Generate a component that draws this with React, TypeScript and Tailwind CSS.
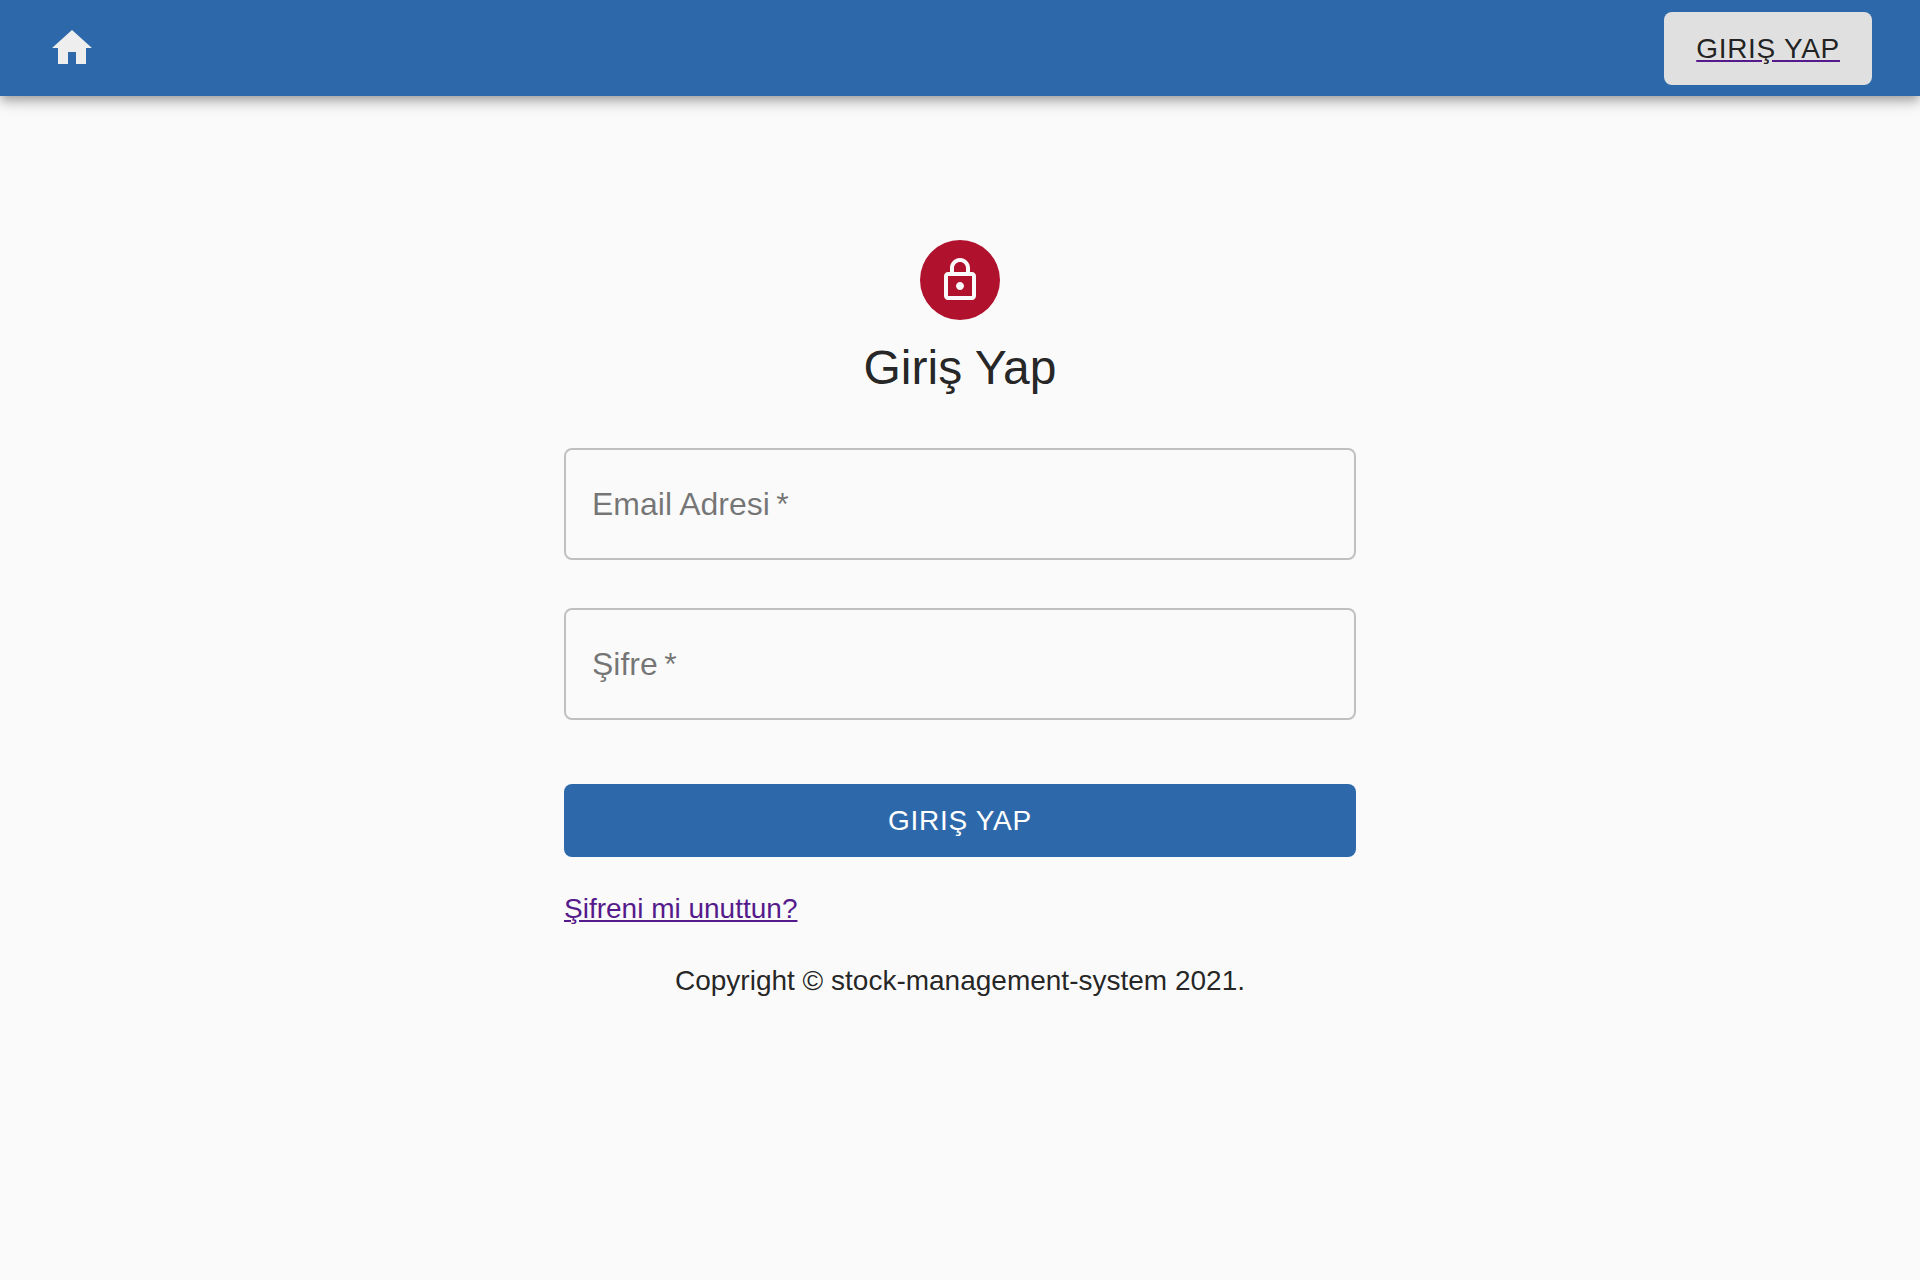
import { useState } from "react";

type FieldProps = {
  id: string;
  label: string;
  type: string;
  autoComplete: string;
};

function HomeIcon() {
  return (
    <svg viewBox="0 0 24 24" className="size-12 fill-current" aria-hidden="true">
      <path d="M10 20v-6h4v6h5v-8h3L12 3 2 12h3v8z" />
    </svg>
  );
}

function LockIcon() {
  return (
    <svg viewBox="0 0 24 24" className="size-12 fill-current" aria-hidden="true">
      <path d="M18 8h-1V6c0-2.76-2.24-5-5-5S7 3.24 7 6v2H6c-1.1 0-2 .9-2 2v10c0 1.1.9 2 2 2h12c1.1 0 2-.9 2-2V10c0-1.1-.9-2-2-2zM9 6c0-1.66 1.34-3 3-3s3 1.34 3 3v2H9V6zm9 14H6V10h12v10zm-6-3c1.1 0 2-.9 2-2s-.9-2-2-2-2 .9-2 2 .9 2 2 2z" />
    </svg>
  );
}

function Field({ id, label, type, autoComplete }: FieldProps) {
  const [value, setValue] = useState("");
  return (
    <div className="relative">
      <input
        id={id}
        name={id}
        type={type}
        required
        autoComplete={autoComplete}
        placeholder=" "
        value={value}
        onChange={(e) => setValue(e.target.value)}
        className="peer block h-28 w-full rounded-lg border-2 border-black/23 bg-transparent px-7 text-[32px] outline-none focus:border-[#2d69aa]"
      />
      <label
        htmlFor={id}
        className="pointer-events-none absolute inset-y-0 left-7 flex items-center text-[32px] leading-8 whitespace-pre text-black/54 peer-focus:hidden peer-[:not(:placeholder-shown)]:hidden"
      >
        {label}
        {"\u2009*"}
      </label>
    </div>
  );
}

export default function App() {
  return (
    <div className="min-h-screen bg-[#fafafa] font-['Liberation_Sans',Arial,sans-serif] text-[28px] leading-10 text-black/87">
      <header className="flex h-24 items-center justify-between bg-[#2d69aa] px-12 shadow-[0_4px_8px_-2px_rgba(0,0,0,0.2),0_8px_10px_0_rgba(0,0,0,0.14),0_2px_20px_0_rgba(0,0,0,0.12)]">
        <a href="#home" aria-label="Ana sayfa" className="text-[#eeeeee]">
          <HomeIcon />
        </a>
        <a
          href="#login"
          className="rounded-lg bg-[#e0e0e0] px-8 py-3 leading-[49px] tracking-wide underline decoration-[#551a8b]"
        >
          GIRIŞ YAP
        </a>
      </header>

      <main className="mx-auto flex max-w-[888px] flex-col px-12 pt-36">
        <div className="flex size-20 items-center justify-center self-center rounded-full bg-[#b0112d] text-[#fafafa]">
          <LockIcon />
        </div>
        <h1 className="mt-4 text-center text-[48px] leading-[64px]">Giriş Yap</h1>

        <form className="mt-12 flex flex-col" onSubmit={(e) => e.preventDefault()}>
          <div className="flex flex-col gap-12">
            <Field id="email" label="Email Adresi" type="email" autoComplete="email" />
            <Field id="password" label="Şifre" type="password" autoComplete="current-password" />
          </div>
          <button
            type="submit"
            className="mt-16 mb-8 rounded-lg bg-[#2d69aa] px-8 py-3 leading-[49px] tracking-wide text-white"
          >
            GIRIŞ YAP
          </button>
          <a href="#forgot-password" className="self-start text-[#551a8b] underline">
            Şifreni mi unuttun?
          </a>
        </form>

        <p className="mt-8 text-center">Copyright © stock-management-system 2021.</p>
      </main>
    </div>
  );
}
